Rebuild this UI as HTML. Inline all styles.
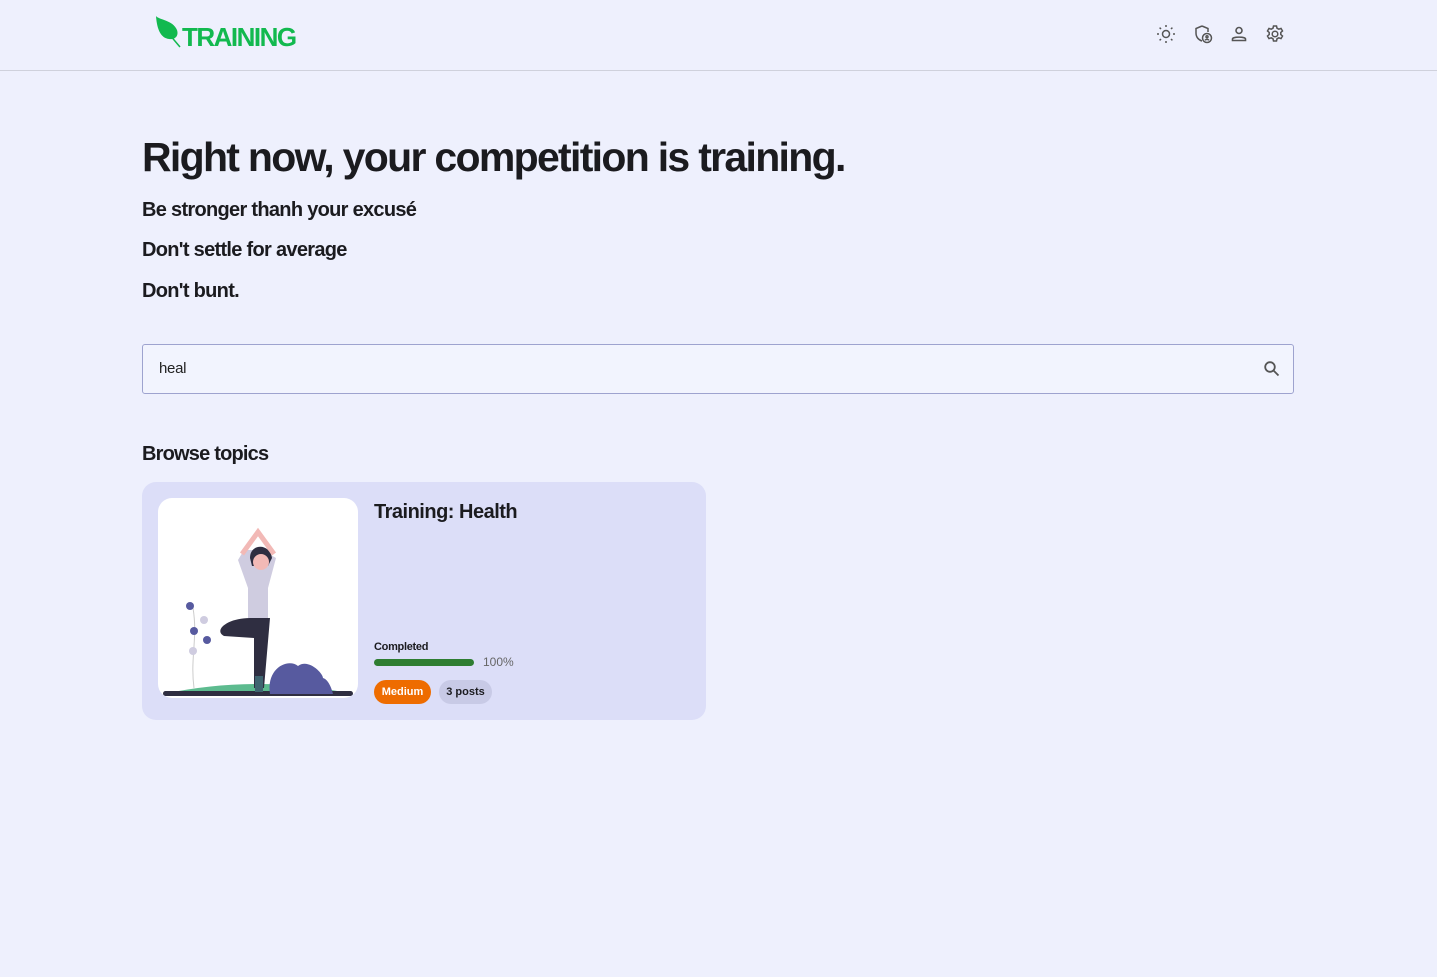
<!DOCTYPE html>
<html><head><meta charset="utf-8"><style>
body{margin:0;background:#eef0fd;font-family:"Liberation Sans",Roboto,sans-serif;color:#1b1b1f;width:1437px;height:977px;overflow:hidden;position:relative}
.hdr{position:absolute;left:0;top:0;width:1437px;height:70px;border-bottom:1px solid #cfd1dc}
.logo{position:absolute;left:155px;top:14px}
.logo span{position:absolute;left:27px;top:8px;font-size:26px;font-weight:bold;color:#12b94f;letter-spacing:-1.5px}
.icons svg{position:absolute;top:24px;width:20px;height:20px}
h1{position:absolute;left:142px;top:134px;margin:0;font-size:41px;font-weight:bold;letter-spacing:-1.7px}
.sub{position:absolute;left:142px;font-size:20px;font-weight:bold;letter-spacing:-0.7px}
.search{position:absolute;left:142px;top:344px;width:1150px;height:48px;border:1px solid #9ea3cf;border-radius:3px;background:#f2f4fe}
.search span{position:absolute;left:16px;top:15px;font-size:15px;color:#222;letter-spacing:-0.3px}
.card{position:absolute;left:142px;top:482px;width:564px;height:238px;background:#dcdef8;border-radius:14px}
.img{position:absolute;left:16px;top:16px;width:200px;height:200px;background:#fff;border-radius:14px;overflow:hidden}
</style></head><body>
<div class="hdr">
<div class="logo"><svg width="30" height="34" viewBox="0 0 30 34"><path d="M1 2 C4 6 18 6 22 16 C24 22 20 26 14 25 C6 24 2 16 1 2Z" fill="#12b94f"/><path d="M14 20 L25 33" stroke="#12b94f" stroke-width="1.5"/></svg><span>TRAINING</span></div>
<div class="icons">
<svg style="left:1156px" viewBox="0 0 20 20" fill="none" stroke="#555" stroke-width="1.5"><circle cx="10" cy="10" r="3.5"/><path d="M10 1v2M10 17v2M1 10h2M17 10h2M3.6 3.6l1.4 1.4M15 15l1.4 1.4M3.6 16.4L5 15M15 5l1.4-1.4"/></svg>
<svg style="left:1193px" viewBox="0 0 20 20" fill="none" stroke="#555" stroke-width="1.5"><path d="M9 2 L3 4.5 V9 C3 13 5.5 16 9 17"/><path d="M9 2 L15 4.5 V8"/><circle cx="14" cy="14" r="4.5"/><circle cx="14" cy="12.8" r="1"/><path d="M12 16.2 Q14 14.5 16 16.2"/></svg>
<svg style="left:1229px" viewBox="0 0 20 20" fill="none" stroke="#555" stroke-width="1.6"><circle cx="10" cy="6.5" r="3"/><path d="M3.5 16.5 V15 C3.5 12.5 16.5 12.5 16.5 15 V16.5Z"/></svg>
<svg style="left:1265px" viewBox="0 0 20 20" fill="none" stroke="#555" stroke-width="1.5"><circle cx="10" cy="10" r="2.8"/><path d="M8.5 2h3l.5 2.2 1.8 1 2.2-.8 1.5 2.6-1.7 1.5v2l1.7 1.5-1.5 2.6-2.2-.8-1.8 1-.5 2.2h-3l-.5-2.2-1.8-1-2.2.8-1.5-2.6 1.7-1.5v-2L2.5 7l1.5-2.6 2.2.8 1.8-1z"/></svg>
</div></div>
<h1>Right now, your competition is training.</h1>
<div class="sub" style="top:199px">Be stronger thanh your excusé</div>
<div class="sub" style="top:239px">Don't settle for average</div>
<div class="sub" style="top:280px">Don't bunt.</div>
<div class="search"><span>heal</span>
<svg style="position:absolute;right:12px;top:15px" width="18" height="18" viewBox="0 0 18 18" fill="none" stroke="#555" stroke-width="1.8"><circle cx="7" cy="7" r="4.8"/><path d="M10.5 10.5l5 5"/></svg></div>
<div class="sub" style="top:443px;letter-spacing:-0.8px">Browse topics</div>
<div class="card">
<div class="img"><svg width="200" height="200" viewBox="0 0 200 200">
<path d="M5 196 Q100 176 195 196Z" fill="#5dbb8f"/><rect x="5" y="193" width="190" height="5" rx="2.5" fill="#2f2e41"/>
<path d="M112 196 C108 170 130 160 140 168 C150 160 165 175 165 180 C172 182 175 196 175 196Z" fill="#575a9f"/>
<path d="M36 190 C32 160 40 140 35 110" stroke="#ccc" fill="none"/>
<circle cx="32" cy="108" r="4" fill="#575a9f"/><circle cx="36" cy="133" r="4" fill="#575a9f"/><circle cx="49" cy="142" r="4" fill="#575a9f"/><circle cx="46" cy="122" r="4" fill="#cfcce0"/><circle cx="35" cy="153" r="4" fill="#cfcce0"/>
<path d="M86 52 L104 52 L118 60 L110 90 L110 120 L90 120 L90 90 L80 62Z" fill="#cfcce0"/>
<path d="M92 60 C92 45 112 45 114 60 L110 68 L94 68 Z" fill="#2f2e41"/>
<circle cx="103" cy="64" r="8" fill="#f2b9b6"/>
<path d="M84 56 L100 34 L116 56" stroke="#f2b9b6" stroke-width="5" fill="none"/>
<path d="M92 120 C70 120 55 132 66 138 L96 140 L96 190 L106 190 L112 120Z" fill="#2f2e41"/>
<rect x="97" y="178" width="8" height="16" fill="#3f6470"/>
</svg></div>
<div style="position:absolute;left:232px;top:19px;font-size:20px;font-weight:bold;letter-spacing:-0.5px">Training: Health</div>
<div style="position:absolute;left:232px;top:159px;font-size:11px;font-weight:bold;letter-spacing:-0.3px">Completed</div>
<div style="position:absolute;left:232px;top:177px;width:100px;height:7px;border-radius:4px;background:#2e7d32"></div>
<div style="position:absolute;left:341px;top:173px;font-size:12px;color:#666">100%</div>
<div style="position:absolute;left:232px;top:198px;width:57px;height:24px;border-radius:12px;background:#ee6c00;color:#fff;font-size:11px;font-weight:bold;text-align:center;line-height:24px">Medium</div>
<div style="position:absolute;left:297px;top:198px;width:53px;height:24px;border-radius:12px;background:#c8cae6;font-size:11px;font-weight:bold;text-align:center;line-height:24px">3 posts</div>
</div>
</body></html>
